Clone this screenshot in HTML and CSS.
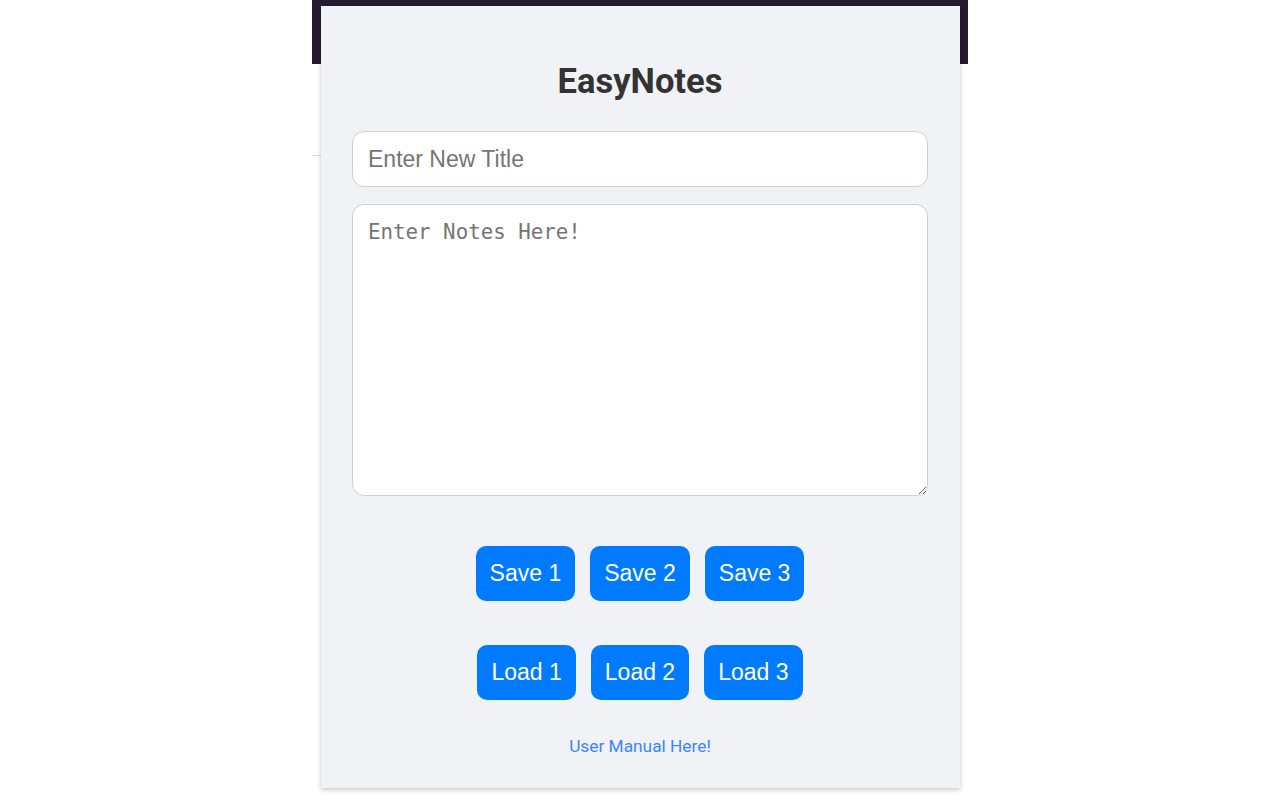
FILE: index.html
```
<!DOCTYPE html>
<html>
<head>
<meta charset="utf-8">
<title>EasyNotes</title>
<link rel="stylesheet" href="styles.css">
</head>
<body>
<div class="backdrop">
  <div class="backdrop-bar"></div>
  <div class="backdrop-rule"></div>
</div>
<div class="popup">
  <h1 class="title">EasyNotes</h1>
  <input class="title-input" type="text" placeholder="Enter New Title">
  <textarea class="notes" placeholder="Enter Notes Here!"></textarea>
  <div class="btn-row save-row">
    <button class="btn">Save 1</button>
    <button class="btn">Save 2</button>
    <button class="btn">Save 3</button>
  </div>
  <div class="btn-row load-row">
    <button class="btn">Load 1</button>
    <button class="btn">Load 2</button>
    <button class="btn">Load 3</button>
  </div>
  <a class="manual" href="#">User Manual Here!</a>
</div>
</body>
</html>
```
FILE: styles.css
```
html, body {
  margin: 0;
  padding: 0;
  background: #ffffff;
  width: 1280px;
  height: 800px;
  overflow: hidden;
}

.backdrop {
  width: 656px;
  margin: 0 auto;
  display: flex;
  flex-direction: column;
}

.backdrop-bar {
  height: 64px;
  background: #251b31;
}

.backdrop-rule {
  margin-top: 91px;
  width: 12px;
  height: 1px;
  background: #d9dbe0;
}

.popup {
  position: absolute;
  top: 6px;
  left: calc(50% - 319px);
  width: 639px;
  height: 782px;
  box-sizing: border-box;
  padding: 0 32px 0 31px;
  background: #f0f2f5;
  box-shadow: 0 2px 5px rgba(0, 0, 0, 0.22);
  display: flex;
  flex-direction: column;
  align-items: stretch;
}

.title {
  margin: 56px 0 0;
  font-family: Roboto, "Liberation Sans", sans-serif;
  font-weight: 700;
  font-size: 34.5px;
  line-height: 39px;
  color: #333333;
  text-align: center;
}

.title-input {
  margin-top: 30px;
  height: 56px;
  box-sizing: border-box;
  padding: 0 15px;
  border: 1px solid #d0d0d0;
  border-radius: 12px;
  background: #ffffff;
  font-family: "Liberation Sans", Arial, sans-serif;
  font-size: 23px;
  color: #333333;
  outline: none;
}

.title-input::placeholder {
  color: #757575;
}

.notes {
  margin-top: 17px;
  height: 292px;
  box-sizing: border-box;
  padding: 14px 15px;
  border: 1px solid #d0d0d0;
  border-radius: 12px;
  background: #ffffff;
  font-family: "DejaVu Sans Mono", "Liberation Mono", monospace;
  font-size: 20.8px;
  line-height: 26px;
  color: #333333;
  outline: none;
  resize: vertical;
}

.notes::placeholder {
  color: #757575;
}

.btn-row {
  display: flex;
  justify-content: center;
  gap: 15px;
}

.save-row {
  margin-top: 50px;
}

.load-row {
  margin-top: 44px;
}

.btn {
  height: 55px;
  padding: 0 14px;
  border: none;
  border-radius: 10px;
  background: #007bff;
  color: #ffffff;
  font-family: "Liberation Sans", Arial, sans-serif;
  font-size: 23px;
  cursor: pointer;
}

.manual {
  margin-top: 36px;
  align-self: center;
  font-family: Roboto, "Liberation Sans", sans-serif;
  font-size: 17.3px;
  line-height: 20px;
  color: #3a86ff;
  text-decoration: none;
}
```
